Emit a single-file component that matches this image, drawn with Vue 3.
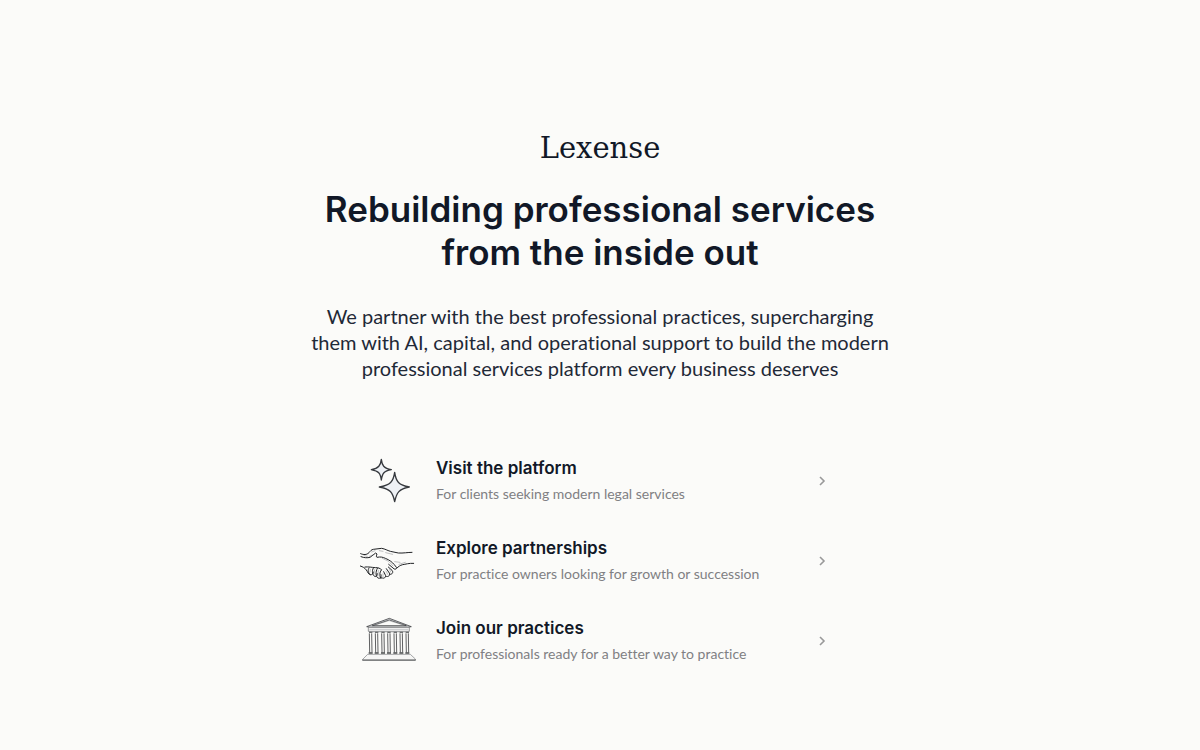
<script setup>
const links = [
  { icon: 'sparkles', title: 'Visit the platform', text: 'For clients seeking modern legal services' },
  { icon: 'handshake', title: 'Explore partnerships', text: 'For practice owners looking for growth or succession' },
  { icon: 'temple', title: 'Join our practices', text: 'For professionals ready for a better way to practice' },
]
const columns = [47, 65, 84, 102, 121, 139, 157]
</script>

<template>
  <main class="page">
    <header class="intro">
      <div class="logo">Lexense</div>
      <h1>Rebuilding professional services from the inside out</h1>
      <p>We partner with the best professional practices, supercharging them with AI, capital, and operational support to build the modern professional services platform every business deserves</p>
    </header>

    <nav class="links" aria-label="Get started">
      <a v-for="link in links" :key="link.title" class="link" href="#">
        <svg v-if="link.icon === 'sparkles'" class="icon" viewBox="15 21 168 144" aria-hidden="true">
          <g fill="#eef1f5" stroke="#36393e" stroke-width="4" stroke-linejoin="round">
            <path d="M79 28C81 46 86 55 109 59C87 63 82 69 79 90C76 69 71 64 49 59C71 55 77 46 79 28Z" />
            <path d="M119 67C123 95 131 105 163 111C132 117 125 127 119 155C113 127 106 117 73 111C106 105 115 95 119 67Z" />
          </g>
        </svg>

        <svg v-else-if="link.icon === 'handshake'" class="icon" viewBox="15 6 168 144" aria-hidden="true">
          <g fill="none" stroke="#202225" stroke-width="3" stroke-linecap="round" stroke-linejoin="round">
            <path d="M17 56C26 60 35 60 42 53C46 48 49 44 55 43L80 40C91 42 96 46 106 49L130 54C145 55 158 52 171 52" />
            <path d="M18 65C28 69 37 69 45 67L62 54L66 57C64 62 63 66 66 67C76 65 83 66 91 70C104 75 112 82 118 89L125 98C124 104 118 104 114 99L101 88" />
            <path d="M176 85C162 84 151 88 143 89C135 91 130 95 126 99" />
            <path d="M16 93C24 96 29 98 34 105C39 112 40 118 46 119C52 120 55 116 55 111" />
            <path d="M30 96C41 95 50 97 61 98C69 97 76 100 80 105" />
            <path d="M42 99C37 105 40 115 46 119M55 99C50 108 52 120 59 124C64 126 67 122 67 116M67 100C61 111 62 125 69 129C76 132 80 126 78 119M79 105C73 112 73 124 78 131" />
            <path d="M78 127C85 132 91 130 92 122L86 110M92 124C101 127 106 121 103 114L94 101M104 118C112 119 116 112 111 106L100 96" />
          </g>
          <g fill="none" stroke="#777a7d" stroke-width="1.4" stroke-linecap="round">
            <path d="M50 51L60 47M55 59L43 64M73 47L84 49M92 53L113 58M82 70L101 79M104 82L114 93M132 88L151 82M119 80L135 82M46 103L45 111M59 104L57 117M70 106L69 122M84 116L84 125M93 108L98 118M103 101L107 111M27 62L37 64" />
          </g>
        </svg>

        <svg v-else class="icon" viewBox="15 21 168 144" aria-hidden="true">
          <path d="M35 50L103 25L169 50L159 52H44ZM52 47H154L103 30Z" fill="#d4d6d7" fill-rule="evenodd" stroke="#303235" stroke-width="2.2" stroke-linejoin="round" />
          <path d="M60 45L102 32L145 45" fill="none" stroke="#898c8e" stroke-width="1.2" />
          <path d="M40 52H163V64H40Z" fill="#f8f8f7" stroke="#55585b" stroke-width="1.8" />
          <path d="M43 58H160M42 66H162" fill="none" stroke="#92959a" stroke-width="1.5" />
          <g v-for="x in columns" :key="x">
            <path :d="`M${x - 5} 67H${x + 5}M${x - 4} 70L${x - 3} 127M${x + 3} 70L${x + 4} 127`" fill="none" stroke="#26282b" stroke-width="2.2" />
            <path :d="`M${x - 6} 129H${x + 6}`" fill="none" stroke="#1c1e21" stroke-width="3.6" />
          </g>
          <path d="M38 133H166L181 147V151H23V148Z" fill="#f6f6f5" stroke="#6c6f72" stroke-width="1.8" stroke-linejoin="round" />
          <path d="M22 150H182" fill="none" stroke="#35373a" stroke-width="2.4" />
        </svg>

        <span class="copy">
          <span class="title">{{ link.title }}</span>
          <span class="text">{{ link.text }}</span>
        </span>

        <svg class="chevron" viewBox="0 0 12 12" aria-hidden="true">
          <path d="M4 2L8 6L4 10" fill="none" stroke="#999999" stroke-width="1.6" />
        </svg>
      </a>
    </nav>
  </main>
</template>

<style>
body {
  margin: 0;
  background: #fbfbf9;
}
</style>

<style scoped>
.page {
  box-sizing: border-box;
  min-height: 100vh;
  padding: 128px 24px 40px;
  display: flex;
  flex-direction: column;
  align-items: center;
  color: #111827;
  background: #fbfbf9;
}
.intro {
  width: 100%;
  max-width: 592px;
  text-align: center;
}
.logo {
  font-family: "DejaVu Serif", serif;
  font-size: 29px;
  line-height: 40px;
}
h1 {
  margin: 20px 0 0;
  font-family: Inter, sans-serif;
  font-size: 35px;
  font-weight: 600;
  line-height: 43px;
}
p {
  margin: 29px 0 0;
  font-family: Lato, sans-serif;
  font-size: 20px;
  font-variant-ligatures: none;
  line-height: 26px;
  color: #1f2937;
}
.links {
  width: 100%;
  max-width: 480px;
  margin-top: 76px;
  display: flex;
  flex-direction: column;
  gap: 32px;
}
.link {
  display: flex;
  align-items: center;
  gap: 20px;
  padding-right: 12px;
  color: inherit;
  text-decoration: none;
}
.icon {
  flex: none;
  width: 56px;
  height: 48px;
}
.copy {
  flex: 1;
  display: flex;
  flex-direction: column;
  gap: 4px;
}
.title {
  font-family: Inter, sans-serif;
  font-size: 17px;
  font-weight: 600;
  line-height: 21px;
}
.text {
  font-family: Lato, sans-serif;
  font-size: 14px;
  font-variant-ligatures: none;
  line-height: 21px;
  color: #808083;
}
.chevron {
  flex: none;
  width: 12px;
  height: 12px;
}
</style>
